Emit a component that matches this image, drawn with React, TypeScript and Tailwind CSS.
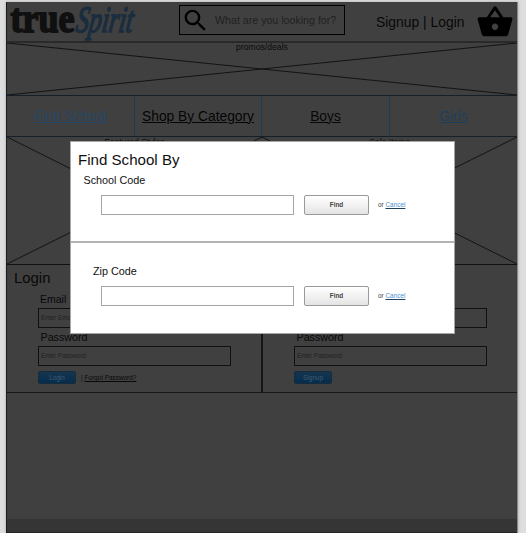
import React from "react";
import { MdSearch, MdShoppingBasket } from "react-icons/md";

function Cross({ className }: { className: string }) {
  return (
    <svg className={className} viewBox="0 0 100 100" preserveAspectRatio="none" fill="none" stroke="#131313">
      <path d="M0 0L100 100M0 100L100 0" vectorEffect="non-scaling-stroke" />
    </svg>
  );
}

function Logo() {
  return (
    <svg className="block h-[39px] w-[140px] shrink-0 overflow-visible" viewBox="0 0 140 39">
      <g fontFamily="'Liberation Serif', serif">
        <text
          transform="translate(3.5 30.2) scale(1 1.5)"
          fontSize="27"
          fontWeight="bold"
          textLength="64"
          lengthAdjust="spacingAndGlyphs"
          fill="#101010"
          stroke="#101010"
          strokeWidth="1.2"
        >
          true
        </text>
        <text
          transform="translate(68 29.5) skewX(-8) scale(1 1.2)"
          fontSize="31"
          fontStyle="italic"
          textLength="57"
          lengthAdjust="spacingAndGlyphs"
          fill="#1a2d3e"
          stroke="#1a2d3e"
          strokeWidth="1.4"
          strokeLinejoin="round"
        >
          Spirit
        </text>
      </g>
    </svg>
  );
}

function Header() {
  return (
    <header className="flex h-[39px] items-start">
      <Logo />
      <div className="ml-[32px] mt-[3px] flex h-[30px] w-[166px] shrink-0 items-center border border-black">
        <MdSearch className="ml-px size-[29px] shrink-0 text-black" />
        <span className="ml-[5px] whitespace-nowrap text-[10.65px] leading-[30px] text-[#202020]">
          What are you looking for?
        </span>
      </div>
      <div className="ml-[31px] mt-[10px] w-[100px] shrink-0 whitespace-nowrap text-[13.9px] leading-[20px] text-[#080808]">
        Signup | Login
      </div>
      <MdShoppingBasket className="mt-px size-[38px] shrink-0 text-black" />
    </header>
  );
}

const navItems = [
  { label: "Find School", tone: "text-[#264766]" },
  { label: "Shop By Category", tone: "text-[#050505]" },
  { label: "Boys", tone: "text-[#080808]" },
  { label: "Girls", tone: "text-[#213e59]" },
];

function Nav() {
  return (
    <nav className="grid h-[42px] grid-cols-[128px_127px_128px_127px] border-y border-[#14202b]">
      {navItems.map((item, i) => (
        <a
          key={item.label}
          className={`flex items-center justify-center whitespace-nowrap pt-px text-[13.8px] leading-[20px] underline underline-offset-1 ${item.tone} ${
            i < 3 ? "border-r border-r-[#1f3a54]" : ""
          }`}
        >
          {item.label}
        </a>
      ))}
    </nav>
  );
}

function Panel({ title }: { title: string }) {
  return (
    <div className="relative h-[127px] text-center text-[8.6px] leading-[10px] text-[#0a0a0a]">
      <Cross className="absolute inset-0 size-full" />
      {title}
    </div>
  );
}

function AccountForm({ title, action, forgot }: { title: string; action: string; forgot?: boolean }) {
  return (
    <section className="h-[127px] pl-[31px] pt-[3px] text-[#080808]">
      <h2 className="-ml-[24px] h-[21px] text-[14.9px] leading-[20px]">{title}</h2>
      <div className="h-[19px] pl-[2px] text-[10.5px] leading-[21px]">Email</div>
      <div className="h-[20px] w-[193px] border border-[#101010] pl-[2px] text-[6.35px] leading-[18px] text-[#202020]">
        Enter Email
      </div>
      <div className="h-[18px] pl-[2.5px] text-[10.7px] leading-[19px]">Password</div>
      <div className="h-[20px] w-[193px] border border-[#101010] pl-[2px] text-[6.35px] leading-[18px] text-[#202020]">
        Enter Password
      </div>
      <div className="mt-[5px] flex items-center text-[6.4px] leading-[13px]">
        <button className="h-[13px] w-[38px] rounded-[2px] border border-[#182b3a] bg-linear-to-b from-[#15354f] to-[#062d4d] text-center leading-[11px] text-[#405b70]">
          {action}
        </button>
        {forgot && (
          <span className="ml-[5px] whitespace-nowrap">
            | <a className="underline">Forgot Password?</a>
          </span>
        )}
      </div>
    </section>
  );
}

function FindRow() {
  return (
    <div className="flex h-[20px] items-center">
      <input className="h-[20px] w-[193px] border border-[#a5a5a5] bg-white" />
      <button className="ml-[10px] h-[20px] w-[65px] rounded-[2px] border border-[#999] bg-linear-to-b from-white to-[#e4e4e4] text-[6.4px] font-bold leading-[18px] text-[#444]">
        Find
      </button>
      <span className="ml-[9px] whitespace-nowrap text-[6.4px] leading-[18px] text-[#444]">
        or <a className="text-[#4a90cf] underline decoration-[#1d405f]">Cancel</a>
      </span>
    </div>
  );
}

function Modal() {
  return (
    <div className="absolute left-[70px] top-[141px] h-[193px] w-[385px] border border-[#a6a6a6] bg-white text-[#111]">
      <section className="h-[101px] border-b-2 border-[#b4b4b4] pl-[30px]">
        <h1 className="-ml-[23px] h-[28px] pt-[8px] text-[15.1px] leading-[20px]">Find School By</h1>
        <div className="-ml-[17.5px] h-[25px] text-[10.8px] leading-[21px]">School Code</div>
        <FindRow />
      </section>
      <section className="pl-[30px] pt-[18px]">
        <div className="-ml-[8px] h-[25px] text-[10.8px] leading-[21px]">Zip Code</div>
        <FindRow />
      </section>
    </div>
  );
}

export default function App() {
  return (
    <div className="relative h-[533px] w-[526px] overflow-hidden bg-[#dedede] pl-[6px] pt-[2px] font-['Liberation_Sans',Arial,sans-serif]">
      <main className="h-[531px] w-[512px] border-l border-r border-l-[#171c1f] border-r-[#888] bg-[#404040] shadow-[0_0_3px_#aaa]">
        <Header />
        <div className="h-[2px] bg-[#2a2a2a]" />
        <div className="relative h-[52px] text-center text-[8.65px] leading-[9px] text-[#0a0a0a]">
          <Cross className="absolute inset-0 size-full" />
          promos/deals
        </div>
        <Nav />
        <div className="grid grid-cols-2 border-b border-[#101010]">
          <Panel title="Featured Styles" />
          <Panel title="Sale Items" />
        </div>
        <div className="grid grid-cols-[256px_1fr] border-b border-[#181818]">
          <div className="border-r-2 border-[#151515]">
            <AccountForm title="Login" action="Login" forgot />
          </div>
          <AccountForm title="Signup" action="Signup" />
        </div>
        <div className="h-[126px]" />
        <footer className="h-[14px] border-b border-[#252525] bg-[#353535]" />
      </main>
      <Modal />
    </div>
  );
}
